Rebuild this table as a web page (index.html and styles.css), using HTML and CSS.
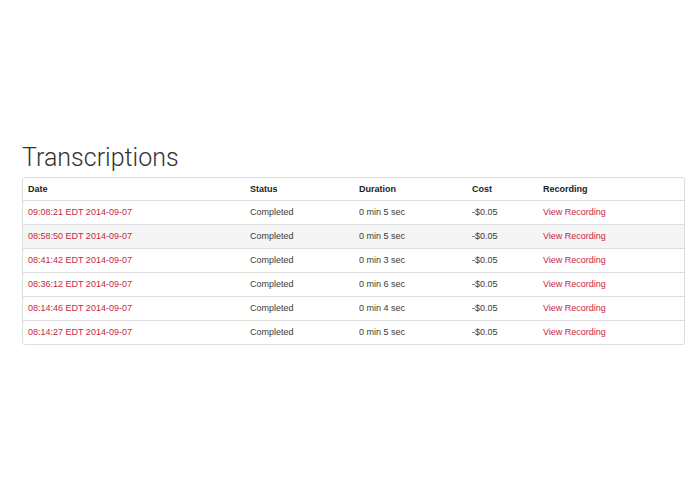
FILE: index.html
```html
<!DOCTYPE html>
<html>
<head>
<meta charset="utf-8">
<link rel="stylesheet" href="styles.css">
</head>
<body>
<div class="page">
  <h1 class="title">Transcriptions</h1>
  <div class="panel">
    <table class="table">
      <colgroup>
        <col class="c-date"><col class="c-status"><col class="c-dur"><col class="c-cost"><col class="c-rec">
      </colgroup>
      <thead>
        <tr><th>Date</th><th>Status</th><th>Duration</th><th>Cost</th><th>Recording</th></tr>
      </thead>
      <tbody>
        <tr><td><a href="#">09:08:21 EDT 2014-09-07</a></td><td>Completed</td><td>0 min 5 sec</td><td>-$0.05</td><td><a href="#">View Recording</a></td></tr>
        <tr class="is-hover"><td><a href="#">08:58:50 EDT 2014-09-07</a></td><td>Completed</td><td>0 min 5 sec</td><td>-$0.05</td><td><a href="#">View Recording</a></td></tr>
        <tr><td><a href="#">08:41:42 EDT 2014-09-07</a></td><td>Completed</td><td>0 min 3 sec</td><td>-$0.05</td><td><a href="#">View Recording</a></td></tr>
        <tr><td><a href="#">08:36:12 EDT 2014-09-07</a></td><td>Completed</td><td>0 min 6 sec</td><td>-$0.05</td><td><a href="#">View Recording</a></td></tr>
        <tr><td><a href="#">08:14:46 EDT 2014-09-07</a></td><td>Completed</td><td>0 min 4 sec</td><td>-$0.05</td><td><a href="#">View Recording</a></td></tr>
        <tr><td><a href="#">08:14:27 EDT 2014-09-07</a></td><td>Completed</td><td>0 min 5 sec</td><td>-$0.05</td><td><a href="#">View Recording</a></td></tr>
      </tbody>
    </table>
  </div>
</div>
</body>
</html>
```

FILE: styles.css
```css
* { box-sizing: border-box; }
html, body { margin: 0; padding: 0; background: #fff; }
body {
  font-family: "Liberation Sans", Arial, sans-serif;
  color: #3a3a3a;
  font-size: 9px;
}
.page {
  padding: 142px 10px 0 22px;
}
.title {
  margin: 0 0 3px 0;
  font-family: Roboto, "Liberation Sans", sans-serif;
  font-weight: 300;
  font-size: 25px;
  line-height: 32px;
  color: #333;
}
.panel {
  width: 663px;
  border: 1px solid #ddd;
  border-radius: 3px;
  box-shadow: 0 1px 1px rgba(0,0,0,0.05);
  overflow: hidden;
}
.table {
  width: 100%;
  border-collapse: collapse;
  table-layout: fixed;
}
.c-date { width: 222px; }
.c-status { width: 109px; }
.c-dur { width: 113px; }
.c-cost { width: 71px; }
.c-rec { width: auto; }
.table th, .table td {
  text-align: left;
  padding: 0 5px;
  height: 24px;
  vertical-align: middle;
  white-space: nowrap;
}
.table th {
  font-weight: bold;
  color: #222;
  height: 22px;
  border-bottom: 1px solid #ddd;
}
.table tbody td { border-top: 1px solid #ddd; }
.table tbody tr:first-child td { border-top: none; }
.table tbody tr.is-hover td { background: #f5f5f5; }
.table a {
  color: #c8283c;
  text-decoration: none;
}
```
